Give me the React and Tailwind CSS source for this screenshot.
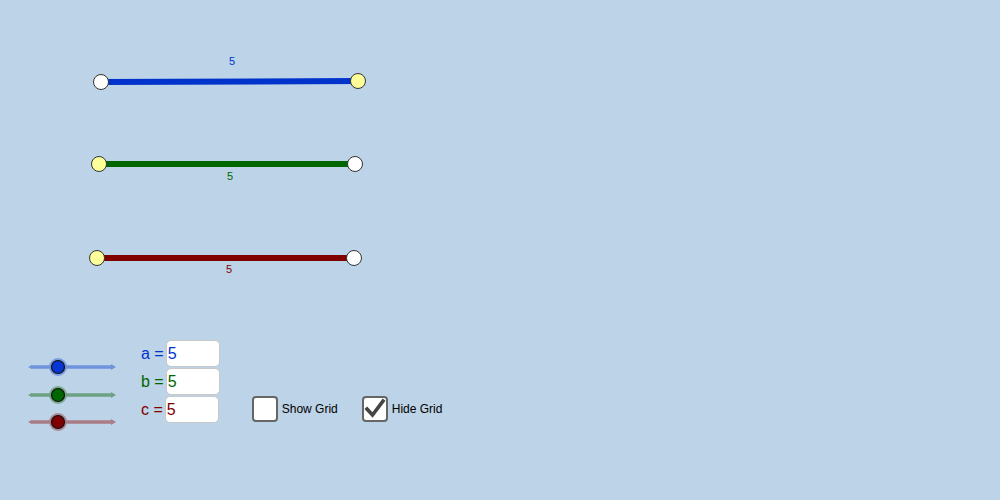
import React from "react";

const segments = [
  { x1: 101, y1: 82, x2: 358, y2: 81, color: "#0033cc", left: "#ffffff", right: "#ffff99", lx: 232, ly: 65 },
  { x1: 99, y1: 164, x2: 355, y2: 164, color: "#006600", left: "#ffff99", right: "#ffffff", lx: 230, ly: 180 },
  { x1: 97, y1: 258, x2: 354, y2: 258, color: "#800000", left: "#ffff99", right: "#ffffff", lx: 229, ly: 273 },
];

const sliders = [
  { y: 27, line: "#6f93dc", thumb: "#0836d4", halo: "#6f93dc" },
  { y: 55, line: "#6ea183", thumb: "#006600", halo: "#6ea183" },
  { y: 82, line: "#a97c86", thumb: "#800000", halo: "#a97c86" },
];

const vars = [
  { name: "a", color: "text-[#0033cc]" },
  { name: "b", color: "text-[#006600]" },
  { name: "c", color: "text-[#800000]" },
];

function Sliders() {
  return (
    <svg width="94" height="92" viewBox="0 0 94 92">
      {sliders.map((s) => (
        <g key={s.y}>
          <line x1="6" y1={s.y} x2="87" y2={s.y} stroke={s.line} strokeWidth="3.5" />
          <polygon points={`3,${s.y} 7,${s.y - 2} 7,${s.y + 2}`} fill={s.line} />
          <polygon points={`91,${s.y} 86,${s.y - 3} 86,${s.y + 3}`} fill={s.line} />
          <circle cx="33" cy={s.y} r="9" fill={s.halo} opacity="0.85" />
          <circle cx="33" cy={s.y} r="6.5" fill={s.thumb} stroke="#111" strokeWidth="1.2" />
        </g>
      ))}
    </svg>
  );
}

function CheckBox({ checked, label }) {
  return (
    <div className="flex items-center gap-[4px]">
      <div className="w-[26px] h-[26px] rounded-[4px] border-2 border-[#666] bg-white flex items-center justify-center">
        {checked && (
          <svg width="22" height="22" viewBox="0 0 22 22">
            <polyline points="3,11 8.5,17 19,3" fill="none" stroke="#444" strokeWidth="3.6" strokeLinecap="square" />
          </svg>
        )}
      </div>
      <span className="text-[12px] text-black">{label}</span>
    </div>
  );
}

export default function App() {
  return (
    <div
      className="relative w-[1000px] h-[500px] bg-[#bdd3e7] overflow-hidden"
      style={{ fontFamily: '"Liberation Sans", Arial, sans-serif' }}
    >
      {/* construction drawing */}
      <svg className="absolute inset-0" width="1000" height="500">
        {segments.map((s) => (
          <g key={s.y1}>
            <line x1={s.x1} y1={s.y1} x2={s.x2} y2={s.y2} stroke={s.color} strokeWidth="6" />
            <circle cx={s.x1} cy={s.y1} r="7.5" fill={s.left} stroke="#333" strokeWidth="1" />
            <circle cx={s.x2} cy={s.y2} r="7.5" fill={s.right} stroke="#333" strokeWidth="1" />
            <text x={s.lx} y={s.ly} fill={s.color} fontSize="11" textAnchor="middle" fontFamily="Liberation Sans, Arial, sans-serif">
              5
            </text>
          </g>
        ))}
      </svg>

      {/* controls */}
      <div className="relative pt-[340px] pl-[25px] flex items-start">
        <Sliders />

        <div className="ml-[22px] flex flex-col gap-[1px]">
          {vars.map((v) => (
            <div key={v.name} className="flex items-center">
              <span className={`text-[16px] ${v.color} mr-[2px]`}>{v.name} =</span>
              <div className={`w-[54px] h-[27px] rounded-[5px] border border-[#c8c8c8] bg-white text-[16px] pl-[1px] flex items-center ${v.color}`}>
                5
              </div>
            </div>
          ))}
        </div>

        <div className="ml-[32px] mt-[56px] flex items-center gap-[24px]">
          <CheckBox label="Show Grid" />
          <CheckBox checked label="Hide Grid" />
        </div>
      </div>
    </div>
  );
}
